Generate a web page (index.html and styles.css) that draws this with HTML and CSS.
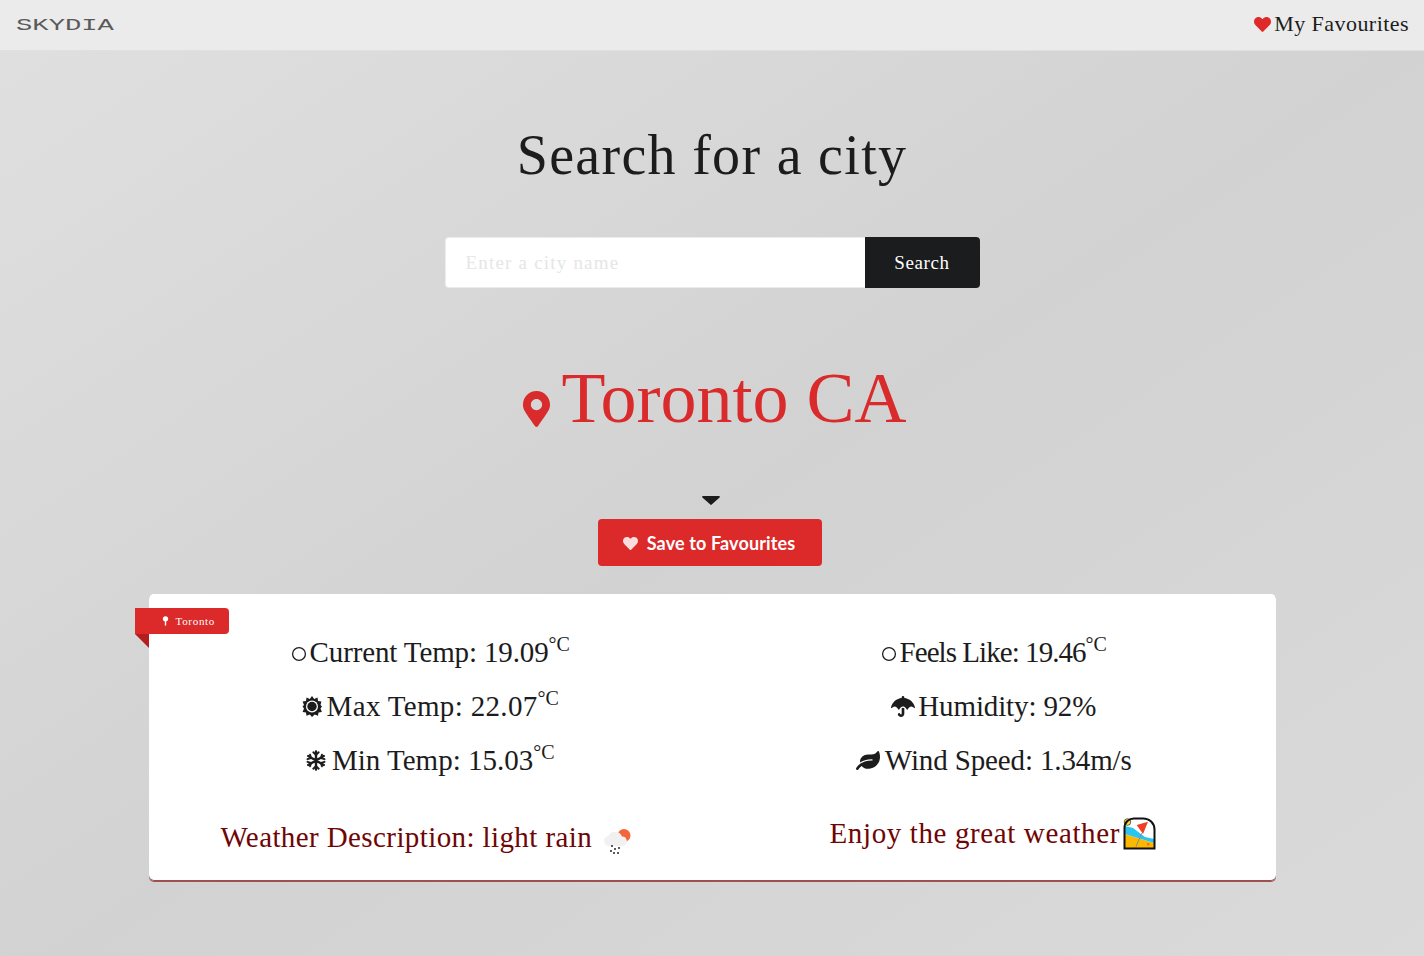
FILE: index.html
```html
<!DOCTYPE html>
<html>
<head>
    <title>Skydia</title>
    <link rel="stylesheet" href="styles.css">
</head>
<body>
    <nav class="navbar">
        <span class="logo">SKYDIA</span>
        <a class="fav-link">
            <svg class="fav-heart" viewBox="0 0 512 512"><path d="M462.3 62.6C407.5 15.9 326 24.3 275.7 76.2L256 96.5l-19.7-20.3C186.1 24.3 104.5 15.9 49.7 62.6c-62.8 53.6-66.1 149.8-9.9 207.9l193.5 199.8c12.5 12.9 32.8 12.9 45.3 0l193.5-199.8c56.3-58.1 53-154.3-9.8-207.9z"/></svg>
            <span>My Favourites</span>
        </a>
    </nav>

    <main class="content">
        <h1 class="title">Search for a city</h1>

        <form class="search">
            <input class="search-input" type="text" placeholder="Enter a city name">
            <button class="search-btn" type="button">Search</button>
        </form>

        <h2 class="city">
            <svg class="city-pin" viewBox="0 0 384 512"><path d="M172.268 501.67C26.97 291.031 0 268.413 0 192 0 85.961 85.961 0 192 0s192 85.961 192 192c0 76.413-26.97 99.031-172.268 309.67-9.535 13.774-29.93 13.773-39.464 0zM192 272c44.183 0 80-35.817 80-80s-35.817-80-80-80-80 35.817-80 80 35.817 80 80 80z"/></svg>
            <span>Toronto CA</span>
        </h2>

        <svg class="caret" viewBox="0 0 18 9"><path d="M1 0h16c.8 0 1.2 1 .6 1.5L9.7 8.6c-.4.4-1 .4-1.4 0L.4 1.5C-.2 1 .2 0 1 0z"/></svg>

        <button class="save-btn" type="button">
            <svg class="save-heart" viewBox="0 0 512 512"><path d="M462.3 62.6C407.5 15.9 326 24.3 275.7 76.2L256 96.5l-19.7-20.3C186.1 24.3 104.5 15.9 49.7 62.6c-62.8 53.6-66.1 149.8-9.9 207.9l193.5 199.8c12.5 12.9 32.8 12.9 45.3 0l193.5-199.8c56.3-58.1 53-154.3-9.8-207.9z"/></svg>
            Save to Favourites
        </button>

        <section class="card">
            <div class="ribbon">
                <svg class="ribbon-pin" viewBox="0 0 8 12"><circle cx="4" cy="3.4" r="3.2"/><rect x="3.2" y="5" width="1.6" height="6.5"/></svg>
                <span>Toronto</span>
            </div>

            <div class="stats">
                <div class="stat">
                    <svg class="ring" viewBox="0 0 16 22"><circle cx="8" cy="13" r="6.4" fill="none" stroke="currentColor" stroke-width="1.3"/></svg>
                    <span>Current Temp: 19.09<sup>°C</sup></span>
                </div>
                <div class="stat stat-feels">
                    <svg class="ring" viewBox="0 0 16 22"><circle cx="8" cy="13" r="6.4" fill="none" stroke="currentColor" stroke-width="1.3"/></svg>
                    <span>Feels Like: 19.46<sup>°C</sup></span>
                </div>
                <div class="stat stat-max">
                    <svg class="sun" viewBox="0 0 20 21"><path d="M10 0l2.2 3 3.3-1.4.5 3.4 3.400.5L18.500 9l1.500 1.500-1.500 2 1.400 3.400-3.400.5-.5 3.400-3.300-1.400L10 21l-2.200-2.600-3.300 1.400-.5-3.400-3.400-.5L2 12.500.5 10.500 2 9 .6 5.500l3.400-.5.5-3.400 3.300 1.400z"/><circle cx="10" cy="10.500" r="6" fill="#fff"/><circle cx="10" cy="10.500" r="4.700"/></svg>
                    <span>Max Temp: 22.07<sup>°C</sup></span>
                </div>
                <div class="stat">
                    <svg class="umbrella" viewBox="0 0 576 512" preserveAspectRatio="none"><path d="M575.7 280.8C547.1 144.5 437.3 62.6 320 49.9V32c0-17.7-14.3-32-32-32s-32 14.3-32 32v17.9C138.3 62.6 29.5 144.5.3 280.8c-2.2 10.1 8.5 21.3 18.7 11.4 52-55 107.7-52.4 158.6 37 5.3 9.5 14.9 8.6 19.7 0 20.2-35.4 44.9-73.2 90.7-73.2 58.5 0 88.2 68.8 90.7 73.2 4.8 8.6 14.4 9.5 19.7 0 51-89.5 107.1-91.4 158.6-37 10.3 10 20.9-1.3 18.7-11.4zM256 301.7V432c0 8.8-7.2 16-16 16-7.8 0-13.2-5.3-15.1-10.7-5.9-16.7-24.1-25.4-40.8-19.5-16.7 5.9-25.4 24.2-19.5 40.8 11.2 31.9 41.6 53.3 75.4 53.3 44.1 0 80-35.9 80-80V301.6c-9.1-7.9-19.8-13.6-32-13.6-12.3 0-23 5.8-32 13.7z"/></svg>
                    <span>Humidity: 92%</span>
                </div>
                <div class="stat stat-min">
                    <svg class="snow" viewBox="0 0 20 20"><g stroke="currentColor" stroke-linecap="round" fill="none"><path d="M10 1v18M2.2 5.5l15.600 9M17.800 5.500l-15.600 9" stroke-width="2.400"/><path d="M7.300 1.800L10 4.400l2.700-2.600M7.300 18.200l2.700-2.600 2.700 2.600M1.500 8.700l3.500-1-.9-3.500M18.500 11.300l-3.500 1 .9 3.500M18.500 8.700l-3.500-1 .9-3.500M1.500 11.300l3.500 1-.9 3.500" stroke-width="1.900"/></g></svg>
                    <span>Min Temp: 15.03<sup>°C</sup></span>
                </div>
                <div class="stat">
                    <svg class="leaf" viewBox="0 0 576 512" preserveAspectRatio="none"><path d="M546.2 9.7c-5.6-12.5-21.6-13-28.3-1.2C486.9 62.4 431.4 96 368 96h-80C182 96 96 182 96 288c0 7 .8 13.7 1.5 20.5C161.3 262.8 253.4 224 384 224c8.8 0 16 7.2 16 16s-7.2 16-16 16C132.6 256 26 410.1 2.4 468c-6.6 16.3 1.2 34.9 17.5 41.6 16.4 6.8 35-1.1 41.8-17.3 1.5-3.6 20.9-47.9 71.9-90.6 32.4 43.9 94 85.8 174.9 77.2C465.5 467.5 576 326.7 576 154.3c0-50.2-10.8-102.2-29.8-144.6z"/></svg>
                    <span>Wind Speed: 1.34m/s</span>
                </div>
            </div>

            <div class="notes">
                <div class="note note-desc">
                    <span>Weather Description: light rain</span>
                    <svg class="rain-icon" viewBox="0 0 30 28">
                        <circle cx="21" cy="7.5" r="6.5" fill="#f1663c"/>
                        <path d="M6 18a5 5 0 0 1-.8-9.9A7.500 7.500 0 0 1 19 8.500a4.800 4.800 0 0 1 1 9.500z" fill="#f1f1f1"/>
                        <g fill="#5c5c5c"><rect x="8" y="17" width="2" height="2"/><rect x="15" y="19" width="2" height="2"/><rect x="11" y="20" width="2" height="2"/><rect x="7" y="22" width="2" height="2"/><rect x="10" y="24" width="2" height="2"/><rect x="14" y="24" width="2" height="2"/></g>
                    </svg>
                </div>
                <div class="note note-tip">
                    <span>Enjoy the great weather</span>
                    <svg class="beach-icon" viewBox="0 0 33 33">
                        <path d="M1.500 31.500V11C1.500 5 6 1.500 11 1.500h9c7 0 11.500 5 11.500 11v19z" fill="#fff"/>
                        <path d="M2 17l16 5 13 4v5.500H2z" fill="#fdb900"/>
                        <path d="M2 9l8 2 12 9 9 2v4l-13-4-16-5z" fill="#29c5f0"/>
                        <path d="M13.700 8L25 4.700 20 17z" fill="#ee3e23"/>
                        <path d="M18.700 16.300L13 29.700" stroke="#8a8a8a" stroke-width="1"/>
                        <circle cx="4.500" cy="5" r="3.300" fill="#fdd835" stroke="#111" stroke-width=".6"/>
                        <rect x="24" y="26" width="2.500" height="2.500" fill="#f4732a"/>
                        <path d="M1.500 31.500V11C1.500 5 6 1.500 11 1.500h9c7 0 11.500 5 11.500 11v19z" fill="none" stroke="#111" stroke-width="2"/>
                    </svg>
                </div>
            </div>
        </section>
    </main>
</body>
</html>
```

FILE: styles.css
```css
* {
    box-sizing: border-box;
}

body {
    margin: 0;
    min-height: 956px;
    font-family: "Liberation Serif", serif;
    color: #1c1c1c;
    background-image: linear-gradient(to bottom right, #e0e0e0, #d2d2d2 52%, #dadada);
}

.navbar {
    height: 51px;
    padding: 0 15px 0 16px;
    display: flex;
    justify-content: space-between;
    align-items: center;
    background-color: #ebebeb;
    border-bottom: 1px solid #e0e0e0;
}

.logo {
    font-family: "Liberation Mono", monospace;
    font-size: 17px;
    color: #5a5a5a;
    transform: scaleX(1.6);
    transform-origin: left center;
}

.fav-link {
    display: flex;
    align-items: center;
    gap: 3px;
    margin-bottom: 3px;
    font-size: 22px;
    letter-spacing: 0.45px;
}

.fav-heart {
    width: 17px;
    height: 17px;
    margin-top: 1px;
    fill: #e02a2a;
}

.content {
    display: flex;
    flex-direction: column;
    align-items: center;
}

.title {
    margin: 68px 0 0;
    font-size: 56px;
    line-height: 72px;
    font-weight: normal;
    letter-spacing: 1.3px;
}

.search {
    display: flex;
    width: 535px;
    height: 51px;
    margin-top: 46px;
}

.search-input {
    flex: 1;
    min-width: 0;
    padding: 0 20px;
    font-family: inherit;
    font-size: 19px;
    letter-spacing: 1.2px;
    background-color: #fff;
    border: 1px solid #ececec;
    border-right: none;
    border-radius: 4px 0 0 4px;
    outline: none;
}

.search-input::placeholder {
    color: #e6e6e6;
    opacity: 1;
}

.search-btn {
    width: 115px;
    font-family: inherit;
    font-size: 19px;
    letter-spacing: 0.6px;
    color: #fff;
    background-color: #1b1c1e;
    border: none;
    border-radius: 0 4px 4px 0;
}

.city {
    display: flex;
    align-items: flex-end;
    gap: 12px;
    margin: 65px 0 0 5px;
    font-size: 72px;
    line-height: 90px;
    font-weight: normal;
    color: #d92b2b;
}

.city-pin {
    width: 27px;
    height: 36px;
    margin-bottom: 16px;
    fill: #d92b2b;
}

.caret {
    width: 18px;
    height: 9px;
    margin: 53px 3px 14px 0;
    fill: #1c1c1c;
}

.save-btn {
    display: flex;
    align-items: center;
    gap: 9px;
    height: 47px;
    padding: 0 27px 0 25px;
    font-family: Lato, sans-serif;
    font-size: 18px;
    font-weight: bold;
    letter-spacing: 0.13px;
    color: #fff;
    background-color: #dc2929;
    border: none;
    border-radius: 4px;
    margin-right: 4px;
}

.save-heart {
    width: 15px;
    height: 15px;
    margin-top: 2px;
    fill: #fbdcdc;
}

.card {
    position: relative;
    width: 1127px;
    height: 287px;
    margin-top: 28px;
    padding-top: 31px;
    background-color: #fff;
    border-radius: 5px;
    box-shadow: inset 0 -1px 0 #666, 0 1px 0 #d33c3c;
}

.ribbon {
    position: absolute;
    left: -14px;
    top: 14px;
    display: flex;
    align-items: center;
    gap: 7px;
    width: 94px;
    height: 26px;
    padding-left: 27px;
    font-size: 11px;
    letter-spacing: 0.7px;
    color: #fff;
    background-color: #dc2929;
    border-radius: 0 4px 4px 0;
}

.ribbon::after {
    content: "";
    position: absolute;
    left: 0;
    top: 26px;
    border-top: 14px solid #b31e1e;
    border-left: 14px solid transparent;
}

.ribbon-pin {
    width: 7px;
    height: 10px;
    fill: #fff;
}

.stats {
    display: grid;
    grid-template-columns: 1fr 1fr;
    grid-auto-rows: 54px;
}

.stat {
    display: flex;
    justify-content: center;
    align-items: center;
    gap: 5px;
    font-size: 29px;
    letter-spacing: -0.13px;
}

.stat-feels {
    letter-spacing: -0.95px;
}

.stat-max {
    letter-spacing: 0.33px;
}

.stat-min {
    letter-spacing: 0;
}

.stat sup {
    font-size: 20px;
    line-height: 0;
    letter-spacing: 0;
}

.ring {
    width: 16px;
    height: 22px;
    margin-right: -2px;
}

.sun {
    width: 20px;
    height: 21px;
    fill: currentColor;
}

.snow {
    width: 20px;
    height: 21px;
    margin-right: 1px;
}

.umbrella {
    width: 24px;
    height: 21px;
    margin-right: -2px;
    fill: currentColor;
}

.leaf {
    width: 24px;
    height: 19px;
    fill: currentColor;
}

.notes {
    display: grid;
    grid-template-columns: 1fr 1fr;
    align-items: start;
    margin-top: 30px;
    color: #6f0505;
    font-size: 29px;
    letter-spacing: 0.4px;
}

.note {
    display: flex;
    justify-content: center;
    align-items: center;
}

.note-desc {
    padding-top: 1px;
    margin-right: 7px;
}

.note-tip {
    margin-right: 2px;
    letter-spacing: 0.62px;
}

.rain-icon {
    width: 30px;
    height: 28px;
    margin-top: 10px;
    margin-left: 11px;
}

.beach-icon {
    width: 33px;
    height: 33px;
    margin-left: 3px;
}
```
